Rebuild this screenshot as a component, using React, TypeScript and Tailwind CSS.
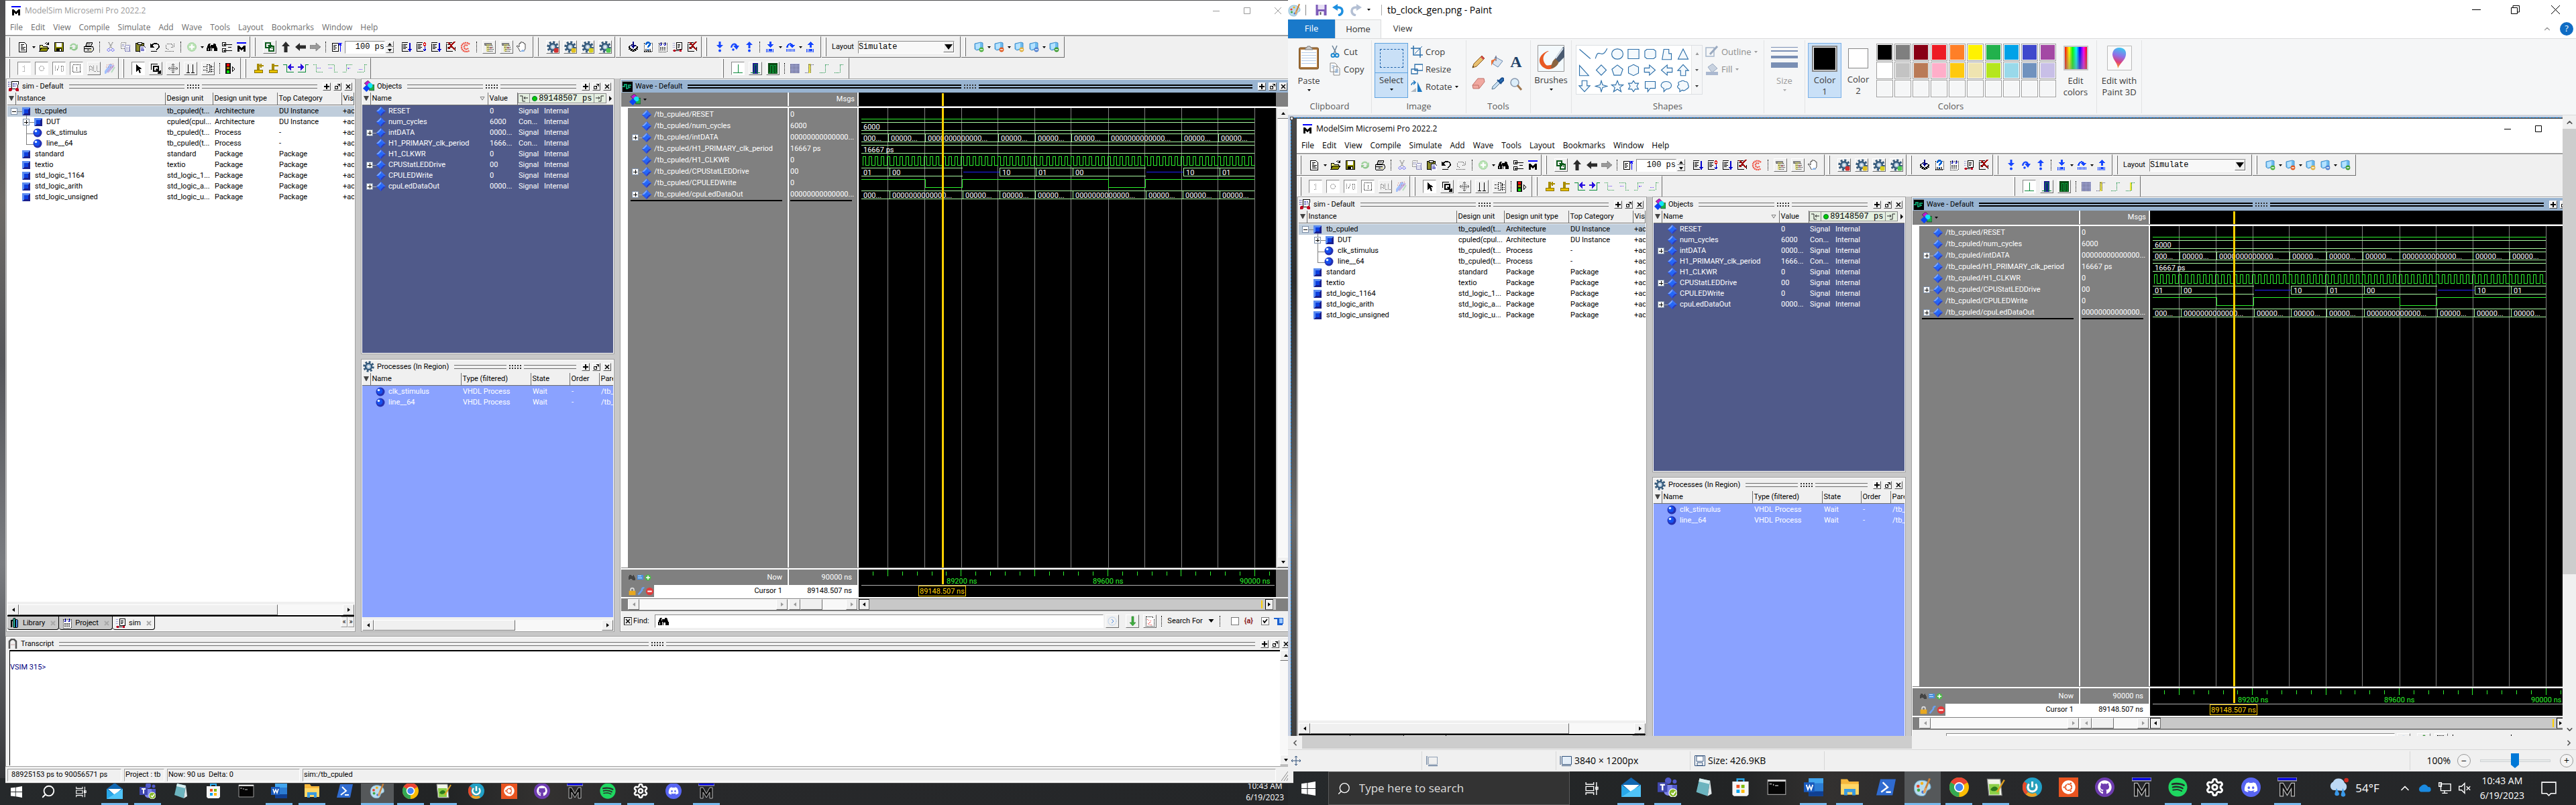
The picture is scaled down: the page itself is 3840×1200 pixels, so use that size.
import type { ReactNode } from "react";
import { FaDiscord, FaGithub, FaSpotify, FaUbuntu } from "react-icons/fa";
import { Settings, ChevronUp, ChevronDown, ChevronLeft, ChevronRight, Search } from "lucide-react";

/* ------------------------------------------------------------------ */
/* Small drawing helpers                                               */
/* ------------------------------------------------------------------ */

type Kids = { children?: ReactNode };

function Glyph({ children, size = 16, crisp = true }: Kids & { size?: number; crisp?: boolean }) {
  return (
    <svg
      viewBox="0 0 16 16"
      width={size}
      height={size}
      fill="none"
      className="shrink-0"
      shapeRendering={crisp ? "crispEdges" : "auto"}
      aria-hidden="true"
    >
      {children}
    </svg>
  );
}

function DownTri({ color = "#000" }: { color?: string }) {
  return (
    <svg viewBox="0 0 5 3" width="5" height="3" className="shrink-0" aria-hidden="true">
      <path d="M0 0h5L2.5 3z" fill={color} />
    </svg>
  );
}

const icons: Record<string, ReactNode> = {
  doc: (
    <Glyph>
      <path d="M2.5 1.5h8l3 3v11h-11z" fill="#fff" stroke="#000" />
      <path d="M4.5 4h5M4.5 6h3M4.5 8h7M4.5 10h5M4.5 12.5h7" stroke="#000" />
    </Glyph>
  ),
  open: (
    <Glyph>
      <path d="M1 14V5h4l1 2h6v2" fill="#ffff7a" stroke="#000" />
      <path d="M1 14l3-5h11l-3 5z" fill="#8a8a00" stroke="#000" />
      <path d="M9 3c2-2 4-1 5 1M14 1v3h-3" stroke="#000" />
    </Glyph>
  ),
  save: (
    <Glyph>
      <path d="M1.5 1.5h13v13h-13z" fill="#8a8a00" stroke="#000" />
      <path d="M4 2h8v6H4z" fill="#fff" />
      <path d="M4 10h8v4H4z" fill="#000" />
      <path d="M9 11h2v3H9z" fill="#fff" />
    </Glyph>
  ),
  refresh: (
    <Glyph crisp={false}>
      <path d="M2 7c1-5 8-6 10-2l2-1v5H9l2-2C9 4 5 4 5 7z" fill="#a4d3a2" />
      <path d="M14 9c-1 5-8 6-10 2l-2 1V8h5l-2 2c2 2 5 1 6-1z" fill="#8fc78c" />
    </Glyph>
  ),
  print: (
    <Glyph>
      <path d="M4 6l2-5h8l-2 5z" fill="#fff" stroke="#000" />
      <path d="M1 7h13l1 2v4l-2 2H2l-1-2z" fill="#ddd" stroke="#000" />
      <path d="M2 10h10M6 3h5M6 12h3" stroke="#000" />
      <path d="M10 12h2" stroke="#bb0" />
    </Glyph>
  ),
  cut: (
    <Glyph crisp={false}>
      <path d="M5 1l5 9M11 1L6 10" stroke="#666" strokeDasharray="1 1" strokeWidth="1.5" />
      <circle cx="5" cy="12.5" r="2" stroke="#33f" strokeDasharray="1.5 .7" />
      <circle cx="11" cy="12.5" r="2" stroke="#33f" strokeDasharray="1.5 .7" />
    </Glyph>
  ),
  copy: (
    <Glyph>
      <path d="M1.5 1.5h7v9h-7z" stroke="#555" strokeDasharray="1 1" />
      <path d="M7.5 5.5h7v9h-7z" fill="#fff" stroke="#228" strokeDasharray="1 1" />
      <path d="M9 8h5M9 10h5M9 12h5M3 4h4M3 6h3" stroke="#66a" strokeDasharray="1 1" />
    </Glyph>
  ),
  paste: (
    <Glyph>
      <path d="M1 2h12v12H1z" fill="#8a8a2a" stroke="#000" />
      <path d="M4 1h6v3H4z" fill="#eee" stroke="#000" />
      <path d="M7 6h6l3 3v7H7z" fill="#fff" stroke="#113" />
      <path d="M8.5 9h4M8.5 11h5M8.5 13h5" stroke="#22a" />
    </Glyph>
  ),
  undo: (
    <Glyph>
      <path d="M3 7c2-6 12-5 11 1-1 2-2 3-4 4" stroke="#000" strokeWidth="1.5" />
      <path d="M1 3v6h6z" fill="#000" />
      <path d="M2 14.5h9" stroke="#000" strokeWidth="1.5" />
    </Glyph>
  ),
  redo: (
    <Glyph>
      <path d="M13 7C11 1 2 2 2 8c1 2 2 3 4 4M14 3v5h-5M1 14.5h14" stroke="#444" strokeDasharray="1 1" />
    </Glyph>
  ),
  plus: (
    <Glyph crisp={false}>
      <circle cx="8" cy="8" r="6.5" fill="#b9e2b4" stroke="#74bd70" strokeDasharray="1 1" />
      <path d="M8 4v8M4 8h8" stroke="#fff" strokeWidth="2.5" />
    </Glyph>
  ),
  binoc: (
    <Glyph>
      <path d="M3 3h3v2h4V3h3l3 7v4h-5v-4H8v4H0v-4z" fill="#000" />
      <path d="M2 10v3M10 10v3M5 4v3" stroke="#fff" />
      <path d="M6 14V9h1v5z" fill="#fff" />
    </Glyph>
  ),
  tree: (
    <Glyph>
      <path d="M1.5 1.5h5v5h-5zM1.5 10.5h5v5h-5z" fill="#fff" stroke="#000" />
      <path d="M3 4h3M4 3v3M3 13h3M4 12v3M7 4h9M10 8h5M7 13h9" stroke="#000" />
    </Glyph>
  ),
  m: (
    <Glyph>
      <path d="M1 1h14v2H1z" fill="#00f" />
      <path d="M2 15V6h3l3 4 3-4h3v9h-3v-5l-3 4-3-4v5z" fill="#000" />
    </Glyph>
  ),
  link: (
    <Glyph>
      <path d="M2 2h7v7H2zM7 7h7v7H7z" stroke="#0a5a1a" strokeWidth="2" />
      <path d="M5 5h6v6" stroke="#0a5a1a" />
    </Glyph>
  ),
  up: (
    <Glyph crisp={false}>
      <path d="M8 0l6 7h-3.5v9h-5V7H2z" fill="#2b2b2b" />
    </Glyph>
  ),
  left: (
    <Glyph crisp={false}>
      <path d="M0 8l7-6v3.5h9v5H7V14z" fill="#2b2b2b" />
    </Glyph>
  ),
  right: (
    <Glyph crisp={false}>
      <path d="M16 8L9 2v3.5H0v5h9V14z" fill="#9a9a9a" stroke="#555" strokeDasharray="1 1" />
    </Glyph>
  ),
  docUp: (
    <Glyph>
      <path d="M1 2.5h9v12H1z" fill="#fff" stroke="#000" />
      <path d="M3 5h5M3 7h3M3 9h5M3 11h3" stroke="#000" />
      <path d="M13 15V2M10 2.5h6M11 6l2-3 2 3" stroke="#00f" />
    </Glyph>
  ),
  docDown: (
    <Glyph>
      <path d="M1 1.5h9M1 3v12M3 4h6M3 6h4M3 8h6M3 10h4M1 14.5h10" stroke="#000" />
      <path d="M13 2v12M11 11l2 3 2-3" stroke="#00c" strokeWidth="1.5" />
    </Glyph>
  ),
  docDiamond: (
    <Glyph>
      <path d="M1 1.5h9M1 3v12M3 4h6M3 6h4M3 8h6M3 10h4M1 14.5h10" stroke="#000" />
      <path d="M13 7v7M11 11l2 3 2-3" stroke="#00c" />
      <path d="M13 1l2 3-2 3-2-3z" stroke="#d00" />
    </Glyph>
  ),
  docX: (
    <Glyph>
      <path d="M1 1.5h9M1 3v12M3 4h6M3 8h6M3 10h4M1 14.5h10M14 8v6" stroke="#000" />
      <path d="M4 1l10 11M14 0L4 11" stroke="#a00000" strokeWidth="2" />
    </Glyph>
  ),
  swirl: (
    <Glyph crisp={false}>
      <path d="M14 4C9-1 1 3 2 9s8 8 12 4M11 6C8 4 5 6 6 9s4 3 6 1" stroke="#f04a3a" strokeWidth="2.2" strokeDasharray="2 .7" />
    </Glyph>
  ),
  hatch: (
    <Glyph>
      <path d="M1 2h11v4H1z" fill="#999" />
      <path d="M4 4h7v11H4z" fill="#dcd98a" />
      <path d="M8 6h6v9H8z" fill="#ddd" />
      <path d="M1 3h11M2 5h11M5 8h9M6 11h9M6 14h8" stroke="#333" strokeDasharray="1 1" />
      <path d="M9 9h3" stroke="#c44" />
    </Glyph>
  ),
  hand: (
    <Glyph crisp={false}>
      <path d="M4 10L1 7l1-1 3 2V3l1-1 1 1V1l2-.5.5 1L11 1l1 1v1l2 .5v7l-2 4H6z" fill="#fff" stroke="#333" strokeWidth=".9" />
      <path d="M6 15l4-3 3 1-1 2z" fill="#8ab4e8" />
    </Glyph>
  ),
  step1: (
    <Glyph>
      <path d="M1 8l6-4 8 4-7 5zM1 11l7 4 7-4M1 9.5l7 4 7-4" fill="#fff" stroke="#000" />
      <path d="M8 0v8M5 5l3 4 3-4" stroke="#008" strokeWidth="1.5" />
    </Glyph>
  ),
  help: (
    <Glyph>
      <path d="M2 2h12v13H2z" fill="#fff" stroke="#000" strokeDasharray="1 1" />
      <path d="M4 13h9M4 11h9M2 14.5h12" stroke="#000" strokeDasharray="2 1" />
      <path d="M5 5c0-5 6-4 6-1 0 2-3 2-3 5M8 11v2" stroke="#0060d0" strokeWidth="2.5" />
    </Glyph>
  ),
  grid2: (
    <Glyph>
      <path d="M2 2h12v13H2z" fill="#fff" stroke="#000" strokeDasharray="1 1" />
      <path d="M4 8h9M4 10h9M4 12h9" stroke="#000" strokeDasharray="2 1" />
      <path d="M5 1v5M11 1v5M3 4l2 2 2-2M9 4l2 2 2-2" stroke="#00a" />
    </Glyph>
  ),
  car: (
    <Glyph>
      <path d="M6 1h8v10H6z" fill="#fff" stroke="#000" />
      <path d="M1 2h4M1 5h4M1 8h4" stroke="#77c" strokeDasharray="1 1" />
      <path d="M8 4h4M8 6h4M8 8h3M2 13h12" stroke="#000" />
      <circle cx="3.5" cy="13.5" r="2" fill="#c00020" />
      <circle cx="12.5" cy="13.5" r="2" fill="#c00020" />
    </Glyph>
  ),
  bDown: (
    <Glyph crisp={false}>
      <path d="M6.5 0h3v5H13l-5 5-5-5h3.5z" fill="#1646ff" />
      <circle cx="8" cy="13.5" r="2" fill="#1646ff" />
    </Glyph>
  ),
  bOver: (
    <Glyph crisp={false}>
      <path d="M2 9C3 1 11 1 12 6h3l-4 6-5-6h3C8 4 5 4 4.5 9z" fill="#1646ff" />
      <circle cx="6" cy="12" r="1.8" fill="#1646ff" />
    </Glyph>
  ),
  bUp: (
    <Glyph crisp={false}>
      <path d="M6.5 10h3V5H13L8 0 3 5h3.5z" fill="#1646ff" />
      <circle cx="8" cy="13.5" r="2" fill="#1646ff" />
    </Glyph>
  ),
  bDown2: (
    <Glyph>
      <path d="M6.5 0h3v4H13l-5 5-5-5h3.5z" fill="#1646ff" />
      <path d="M2 13h12" stroke="#1646ff" strokeWidth="5" strokeDasharray="1 1" />
      <path d="M6 11h4v3H6z" fill="#1646ff" />
    </Glyph>
  ),
  bOver2: (
    <Glyph>
      <path d="M2 9C3 1 11 1 12 5h3l-4 5-5-5h3C8 4 5 4 4.5 9z" fill="#1646ff" />
      <path d="M2 13h13" stroke="#1646ff" strokeWidth="4" strokeDasharray="1 1" />
    </Glyph>
  ),
  bUp2: (
    <Glyph>
      <path d="M6.5 9h3V5H13L8 0 3 5h3.5z" fill="#1646ff" />
      <path d="M2 13h12" stroke="#1646ff" strokeWidth="5" strokeDasharray="1 1" />
      <path d="M6 11h4v3H6z" fill="#1646ff" />
    </Glyph>
  ),
  slot1: (
    <Glyph>
      <path d="M8 4v8M6 5h2M6 12h4" stroke="#777" strokeDasharray="1 1" />
    </Glyph>
  ),
  slot0: (
    <Glyph crisp={false}>
      <circle cx="8" cy="8" r="3.5" stroke="#444" strokeDasharray="1 1" />
    </Glyph>
  ),
  slotIO: (
    <Glyph>
      <path d="M2 4v8M8 4l-3 8M11 4h3v8h-3z" stroke="#555" strokeDasharray="1 1" />
    </Glyph>
  ),
  slotBox: (
    <Glyph>
      <path d="M2.5 2.5h11v11h-11zM8 6v5" stroke="#000" strokeDasharray="1 1" />
    </Glyph>
  ),
  slotAll: (
    <Glyph>
      <path d="M1 12V6l2-2 2 2v6M1 9h4M7.5 4v8h3M12.5 4v8h3" stroke="#555" strokeDasharray="1 1" />
    </Glyph>
  ),
  brushes: (
    <Glyph crisp={false}>
      <path d="M1 14L9 3" stroke="#8fb4ff" strokeWidth="4" strokeLinecap="round" opacity=".8" />
      <path d="M5 13l8-9" stroke="#b8a0dc" strokeWidth="3" strokeLinecap="round" opacity=".8" />
      <path d="M10 14l5-8" stroke="#a9d8b4" strokeWidth="2" opacity=".8" />
      <path d="M3 3l11-2M2 6h10" stroke="#c66" strokeDasharray="1 2" />
    </Glyph>
  ),
  pointer: (
    <Glyph>
      <path d="M5 2v11l3-3 2 5 2-1-2-5h4z" fill="#000" />
    </Glyph>
  ),
  zoomBox: (
    <Glyph>
      <path d="M1.5 10V1.5h9M5 5h7v7H5z" stroke="#000" strokeWidth="1.5" />
      <path d="M9 9l6 6M15 11v4h-4" stroke="#000" strokeWidth="1.5" />
    </Glyph>
  ),
  move: (
    <Glyph crisp={false}>
      <path d="M8 1v14M1 8h14M6 3l2-2 2 2M6 13l2 2 2-2M3 6L1 8l2 2M13 6l2 2-2 2" stroke="#333" strokeDasharray="1.5 .5" />
      <path d="M5 5h6v6H5z" stroke="#666" strokeDasharray="1 1" />
    </Glyph>
  ),
  cursors: (
    <Glyph>
      <path d="M4.5 2v12M11.5 2v12M2 14.5h5M9 14.5h5" stroke="#000" />
    </Glyph>
  ),
  gridBox: (
    <Glyph>
      <path d="M1 5h4M1 10h4M6 2.5h4v11H6zM12 3v11M12 5h4M12 9h4M12 12h4" stroke="#000" strokeDasharray="2 1" />
    </Glyph>
  ),
  traffic: (
    <Glyph>
      <path d="M1 0h8v16H1z" fill="#111" />
      <path d="M3 1h4v4H3z" fill="#f00" />
      <path d="M3 6h4v3H3z" fill="#a80" />
      <path d="M3 11h4v4H3z" fill="#0d0" />
      <path d="M11 5v8l4-4z" fill="#fff" stroke="#000" />
    </Glyph>
  ),
  padPlus: (
    <Glyph>
      <path d="M1 10h12v4H1z" fill="#e8c100" stroke="#8a7200" />
      <path d="M6 10V2h2v8M11 1v6M9 4h6" stroke="#a88c00" strokeWidth="1.5" />
    </Glyph>
  ),
  padMinus: (
    <Glyph>
      <path d="M1 10h12v4H1z" fill="#e8c100" stroke="#8a7200" />
      <path d="M6 10V2h2v8M9 4h6" stroke="#a88c00" strokeWidth="1.5" />
    </Glyph>
  ),
  edgeL: (
    <Glyph>
      <path d="M0 2h5v11h11" stroke="#0a8a3a" />
      <path d="M16 6H9M11 3L8 6l3 3z" stroke="#2a10e0" strokeWidth="1.5" />
    </Glyph>
  ),
  edgeR: (
    <Glyph>
      <path d="M16 2h-5v11H0" stroke="#0a8a3a" />
      <path d="M0 6h7M5 3l3 3-3 3z" stroke="#2a10e0" strokeWidth="1.5" />
    </Glyph>
  ),
  edge1: (
    <Glyph>
      <path d="M1 2h4v11h10" stroke="#2a9a4a" strokeDasharray="1 1" />
      <path d="M12 7H7l2-2" stroke="#63f" strokeDasharray="1 1" />
    </Glyph>
  ),
  edge2: (
    <Glyph>
      <path d="M1 2h9v11h5" stroke="#2a9a4a" strokeDasharray="1 1" />
      <path d="M2 7h5l-2 2" stroke="#63f" strokeDasharray="1 1" />
    </Glyph>
  ),
  edge3: (
    <Glyph>
      <path d="M15 2H6v11H1" stroke="#2a9a4a" strokeDasharray="1 1" />
      <path d="M12 7H8l2 2" stroke="#63f" strokeDasharray="1 1" />
    </Glyph>
  ),
  edge4: (
    <Glyph>
      <path d="M15 2h-4v11H1" stroke="#2a9a4a" strokeDasharray="1 1" />
      <path d="M3 9h5l-2-2" stroke="#63f" strokeDasharray="1 1" />
    </Glyph>
  ),
  pulse: (
    <Glyph>
      <path d="M1 14.5h14M8 2v12" stroke="#0a8a3a" />
    </Glyph>
  ),
  bluePulse: (
    <Glyph>
      <path d="M4 0h8v16H4z" fill="#1a1a8c" />
      <path d="M1 14.5h5V2h4v12.5h5" stroke="#0a8a3a" />
    </Glyph>
  ),
  greenPulse: (
    <Glyph>
      <path d="M1 0h14v16H1z" fill="#0a4a14" />
      <path d="M2 14h2V3h3v11h2V3h3v11h2" stroke="#0a9a3a" />
    </Glyph>
  ),
  mesh: (
    <Glyph>
      <path d="M1 1h14v14H1z" fill="#a9aee0" />
      <path d="M1 2h14M1 4h14M1 6h14M1 8h14M1 10h14M1 12h14M1 14h14" stroke="#334" strokeDasharray="1 1" />
    </Glyph>
  ),
  stepY: (
    <Glyph>
      <path d="M6 1h4v14H6z" fill="#e8e04a" />
      <path d="M1 14h5V2h9M9 3v12" stroke="#447" strokeDasharray="1 1" />
    </Glyph>
  ),
  stepG: (
    <Glyph>
      <path d="M1 14h8V2h6" stroke="#0a8a3a" strokeDasharray="1 1" />
    </Glyph>
  ),
  stepGY: (
    <Glyph>
      <path d="M7 2h3v12H7z" fill="#f0e840" />
      <path d="M1 14h8V2h6" stroke="#0a8a3a" strokeDasharray="1 1" />
    </Glyph>
  ),
};

function GearIcon({ badge, size = 18 }: { badge?: string; size?: number }) {
  return (
    <Glyph size={size} crisp={false}>
      <circle cx="8" cy="8" r="6.3" stroke="#35597a" strokeWidth="3" strokeDasharray="2.6 2.35" />
      <circle cx="8" cy="8" r="4.3" fill="#a9c3da" stroke="#35597a" strokeWidth="2.2" />
      <circle cx="8" cy="8" r="1.6" fill="#f0f0f0" />
      {badge && <rect x="9.5" y="9.5" width="6" height="6" rx="1.5" fill={badge} />}
    </Glyph>
  );
}

function FolderMark({ badge }: { badge: string }) {
  return (
    <Glyph crisp={false}>
      <path d="M2 3l9-2 3 1v8l-9 3-3-2z" fill="#6cbcf0" stroke="#2f7fc0" strokeWidth=".8" />
      <path d="M3 4l7-2v8l-6 2z" fill="#b4e2ff" />
      <circle cx="12" cy="12" r="3.4" fill={badge} />
      <path d="M10 12h4" stroke="#fff" strokeWidth="1.4" />
    </Glyph>
  );
}

function CubesIcon() {
  return (
    <Glyph size={17} crisp={false}>
      <path d="M2 4l5-4 4 4-4 4z" fill="#c21ad0" stroke="#222" strokeWidth=".6" />
      <path d="M9 6h7v8H9z" fill="#1fae48" stroke="#222" strokeWidth=".6" />
      <circle cx="10" cy="7" r="3.5" fill="#10e6f4" />
      <path d="M5 6l5 5-5 5-5-5z" fill="#0c44f4" />
    </Glyph>
  );
}

/* ------------------------------------------------------------------ */
/* ModelSim window                                                     */
/* ------------------------------------------------------------------ */

function Group({ children, className = "" }: Kids & { className?: string }) {
  return (
    <div className={`flex h-8 shrink-0 items-center border-b border-r border-[#6e6e6e] border-t border-t-white pl-1 ${className}`}>
      <span className="mr-2 h-7 w-[3px] shrink-0 border-l border-r border-l-white border-r-[#6e6e6e]" />
      {children}
    </div>
  );
}

function Tb({ id, kind = "flat", children, w = "w-[22px]" }: { id?: string; kind?: "flat" | "raised" | "sunk"; children?: ReactNode; w?: string }) {
  const look =
    kind === "raised"
      ? "h-5 w-5 mx-[3px] border border-t-white border-l-white border-r-[#6e6e6e] border-b-[#6e6e6e] bg-[#f0f0f0]"
      : kind === "sunk"
        ? "h-5 w-5 mx-[3px] border border-t-[#8a8a8a] border-l-[#8a8a8a] border-r-white border-b-white bg-white"
        : `h-5 ${w}`;
  return (
    <button type="button" aria-label={id ?? "tool"} className={`flex shrink-0 items-center justify-center ${look}`}>
      {id ? icons[id] : children}
    </button>
  );
}

function Dots({ className = "mx-2" }: { className?: string }) {
  return <span className={`h-4 w-px shrink-0 border-l border-dotted border-black ${className}`} />;
}

function Arrow({ className = "w-3" }: { className?: string }) {
  return (
    <span className={`flex shrink-0 justify-center ${className}`}>
      <DownTri />
    </span>
  );
}

function MiniButtons() {
  const base =
    "flex h-3 w-3 items-center justify-center border border-t-white border-l-white border-r-[#555] border-b-[#555] bg-[#f0f0f0]";
  return (
    <span className="flex shrink-0 gap-1">
      <button type="button" aria-label="Zoom pane" className={base}>
        <svg viewBox="0 0 8 8" width="8" height="8"><path d="M4 0v8M0 4h8" stroke="#000" strokeWidth="2" /></svg>
      </button>
      <button type="button" aria-label="Undock pane" className={base}>
        <svg viewBox="0 0 8 8" width="8" height="8" fill="none"><path d="M.5 3.5h4v4h-4zM3 5l4-4M4 .5h3.5V4" stroke="#000" /></svg>
      </button>
      <button type="button" aria-label="Close pane" className={base}>
        <svg viewBox="0 0 8 8" width="8" height="8"><path d="M1 1l6 6M7 1L1 7" stroke="#000" strokeWidth="1.5" /></svg>
      </button>
    </span>
  );
}

function PaneTitle({ icon, title, blue = false }: { icon: ReactNode; title: string; blue?: boolean }) {
  const rail = blue ? "border-y-2 border-black" : "border-y border-[#6e6e6e]";
  return (
    <div className={`flex h-[19px] shrink-0 items-center gap-1 pl-px pr-[3px] ${blue ? "bg-[#99b4d1]" : "bg-[#f0f0f0]"}`}>
      {icon}
      <span className="shrink-0 whitespace-nowrap">{title}</span>
      <span className={`ml-1 h-[6px] flex-1 ${rail}`} />
      <span className="h-[6px] w-[18px] shrink-0 border-y-2 border-dotted border-[#333]" />
      <span className={`mr-1 h-[6px] flex-1 ${rail}`} />
      <MiniButtons />
    </div>
  );
}

function PlusBox({ x, y = 3, minus = false }: { x: number; y?: number; minus?: boolean }) {
  return (
    <g>
      <rect x={x + 0.5} y={y + 0.5} width="9" height="9" rx="1" fill="#fff" stroke="#7d8fa8" />
      <path d={`M${x + 2} ${y + 5}h6${minus ? "" : `M${x + 5} ${y + 2}v6`}`} stroke="#000" />
    </g>
  );
}

function BlueBox({ x }: { x: number }) {
  return (
    <g>
      <rect x={x} y="2" width="12" height="12" fill="#0d3fe0" />
      <path d={`M${x} 14V2h12l-3 3h-6v6z`} fill="#5b8cf0" />
      <path d={`M${x} 14l3-3h6V5l3-3v12z`} fill="#1a1f8c" />
    </g>
  );
}

function Ball({ cx }: { cx: number }) {
  return (
    <g shapeRendering="auto">
      <circle cx={cx} cy="8" r="6.5" fill="#2430b0" />
      <circle cx={cx - 1} cy="7" r="4.5" fill="#1650f0" />
      <circle cx={cx - 2.5} cy="5.5" r="1.8" fill="#e4eeff" />
    </g>
  );
}

function DiamondRow({ plus = false, className = "h-4" }: { plus?: boolean; className?: string }) {
  return (
    <svg viewBox="0 0 39 16" width="39" className={`shrink-0 ${className}`} aria-hidden="true">
      {plus && (
        <g shapeRendering="crispEdges">
          <path d="M15 8h7" stroke="#b0b0b0" />
          <PlusBox x={6} />
        </g>
      )}
      <path d="M28 1l7 7-7 7-7-7z" fill="#2a3cc0" />
      <path d="M28 1v7h-7z" fill="#7aa8ff" />
      <path d="M28 1l7 7h-7z" fill="#3d6ff0" />
      <path d="M28 15v-7h-7z" fill="#2c5ae8" />
      <path d="M28 4l4 4-4 4-4-4z" fill="#2368f8" />
    </svg>
  );
}

const simRows: { name: string; kind: "root" | "dut" | "proc" | "last" | "pkg"; unit: string; type: string; cat: string }[] = [
  { name: "tb_cpuled", kind: "root", unit: "tb_cpuled(t...", type: "Architecture", cat: "DU Instance" },
  { name: "DUT", kind: "dut", unit: "cpuled(cpul...", type: "Architecture", cat: "DU Instance" },
  { name: "clk_stimulus", kind: "proc", unit: "tb_cpuled(t...", type: "Process", cat: "-" },
  { name: "line__64", kind: "last", unit: "tb_cpuled(t...", type: "Process", cat: "-" },
  { name: "standard", kind: "pkg", unit: "standard", type: "Package", cat: "Package" },
  { name: "textio", kind: "pkg", unit: "textio", type: "Package", cat: "Package" },
  { name: "std_logic_1164", kind: "pkg", unit: "std_logic_1...", type: "Package", cat: "Package" },
  { name: "std_logic_arith", kind: "pkg", unit: "std_logic_a...", type: "Package", cat: "Package" },
  { name: "std_logic_unsigned", kind: "pkg", unit: "std_logic_u...", type: "Package", cat: "Package" },
];

function SimTree({ kind }: { kind: string }) {
  const deep = kind === "dut" || kind === "proc" || kind === "last";
  return (
    <svg width={deep ? 58 : 41} height="16" className="shrink-0" shapeRendering="crispEdges" fill="none" aria-hidden="true">
      {kind === "root" && (
        <g>
          <path d="M15 8.5h8M28.5 12v4" stroke="#808080" />
          <PlusBox x={5} minus />
          <BlueBox x={22} />
        </g>
      )}
      {kind === "dut" && (
        <g>
          <path d="M28.5 0v16M29 8.5h11" stroke="#808080" />
          <PlusBox x={23} />
          <BlueBox x={40} />
        </g>
      )}
      {kind === "proc" && (
        <g>
          <path d="M28.5 0v16M29 9.5h11" stroke="#808080" />
          <Ball cx={45} />
        </g>
      )}
      {kind === "last" && (
        <g>
          <path d="M28.5 0v10M29 9.5h11" stroke="#808080" />
          <Ball cx={45} />
        </g>
      )}
      {kind === "pkg" && <BlueBox x={22} />}
    </svg>
  );
}

function Th({ children, className = "" }: Kids & { className?: string }) {
  return (
    <th className={`h-[18px] overflow-hidden whitespace-nowrap border-b border-r border-[#6e6e6e] bg-[#f0f0f0] p-0 pl-[2px] text-left font-normal ${className}`}>
      {children}
    </th>
  );
}

function FilterTri() {
  return (
    <svg viewBox="0 0 8 7" width="8" height="7" aria-label="Filter">
      <path d="M0 0h8L4.5 7h-1z" fill="#444" />
    </svg>
  );
}

function HScroll({ thumb }: { thumb: string }) {
  const b = "flex h-4 w-[17px] shrink-0 items-center justify-center border border-t-white border-l-white border-r-[#6e6e6e] border-b-[#6e6e6e] bg-[#f0f0f0]";
  return (
    <div className="flex h-4 shrink-0 bg-[#f8f8f8]">
      <button type="button" aria-label="Scroll left" className={b}>
        <svg viewBox="0 0 4 6" width="4" height="6"><path d="M4 0v6L0 3z" /></svg>
      </button>
      <div className="flex-1">
        <div className={`h-4 border border-t-white border-l-white border-r-[#6e6e6e] border-b-[#6e6e6e] bg-[#f0f0f0] ${thumb}`} />
      </div>
      <button type="button" aria-label="Scroll right" className={b}>
        <svg viewBox="0 0 4 6" width="4" height="6"><path d="M0 0v6l4-3z" /></svg>
      </button>
    </div>
  );
}

const frame = "border border-[#a0a0a0] shadow-[inset_0_0_0_1px_#ffffff] p-px flex flex-col min-h-0 overflow-hidden";

function SimPane() {
  return (
    <section className={`w-[521px] shrink-0 bg-[#f0f0f0] ${frame}`}>
      <PaneTitle icon={<Glyph size={17}><path d="M5 1h10l-2 11H5z" fill="#fff" stroke="#000" /><path d="M0 2h4M0 5h4M0 8h4M7 4h5M7 6h5M7 8h4" stroke="#44a" strokeDasharray="2 1" /><circle cx="3" cy="13" r="2.5" fill="#c00020" /><circle cx="13" cy="13" r="2.5" fill="#c00020" /></Glyph>} title="sim - Default" />
      <div className="min-h-0 flex-1 bg-white">
        <table className="w-full table-fixed border-collapse">
          <colgroup>
            <col className="w-3" />
            <col className="w-[223px]" />
            <col className="w-[71px]" />
            <col className="w-24" />
            <col className="w-24" />
            <col />
          </colgroup>
          <thead>
            <tr>
              <Th><FilterTri /></Th>
              <Th>Instance</Th>
              <Th>Design unit</Th>
              <Th>Design unit type</Th>
              <Th>Top Category</Th>
              <Th>Visi</Th>
            </tr>
          </thead>
          <tbody>
            <tr className="h-[2px]"><td colSpan={6} className="p-0" /></tr>
            {simRows.map((r, i) => (
              <tr key={r.name} className={`h-4 ${i === 0 ? "bg-[#bfcddb]" : ""}`}>
                <td colSpan={2} className="p-0">
                  <span className="flex h-4 items-center"><SimTree kind={r.kind} />{r.name}</span>
                </td>
                <td className="whitespace-nowrap p-0 pl-[3px]">{r.unit}</td>
                <td className="whitespace-nowrap p-0 pl-[3px]">{r.type}</td>
                <td className="whitespace-nowrap p-0 pl-[3px]">{r.cat}</td>
                <td className="overflow-hidden whitespace-nowrap p-0 pl-[2px]">+ac</td>
              </tr>
            ))}
          </tbody>
        </table>
      </div>
      <div className="h-1 shrink-0" />
      <HScroll thumb="w-4/5" />
      <div className="flex h-[23px] shrink-0 items-start border-t-2 border-black">
        {["Library", "Project", "sim"].map((t) => (
          <button
            key={t}
            type="button"
            className={`flex h-5 items-center gap-1 rounded-b border-b border-r border-black px-1 ${t === "sim" ? "bg-[#f0f0f0]" : "bg-[#c8c8c8]"}`}
          >
            {t === "Library" && <Glyph size={15}><path d="M2 15V4h3v11M12 15V4" stroke="#000" strokeWidth="2" /><path d="M5 1h3v14H5z" fill="#2ab8a0" stroke="#000" /><path d="M9 3h3v12H9z" fill="#4a8ae8" stroke="#000" /></Glyph>}
            {t === "Project" && icons.grid2}
            {t === "sim" && icons.car}
            <span>{t}</span>
            <svg viewBox="0 0 8 8" width="8" height="8" className="ml-1"><path d="M1 1l6 6M7 1L1 7" stroke="#a8a8a8" strokeWidth="2" /></svg>
          </button>
        ))}
        <span className="flex-1" />
        <button type="button" aria-label="Previous tab" className="h-4 w-[10px] border border-[#999] border-l-white bg-[#f0f0f0] leading-3">«</button>
        <button type="button" aria-label="Next tab" className="h-4 w-[10px] border border-[#999] border-l-white bg-[#f0f0f0] leading-3">»</button>
      </div>
    </section>
  );
}

const signals = [
  { name: "RESET", value: "0", wave: "0", kind: "Signal", plus: false },
  { name: "num_cycles", value: "6000", wave: "6000", kind: "Con...", plus: false },
  { name: "intDATA", value: "0000...", wave: "00000000000000...", kind: "Signal", plus: true },
  { name: "H1_PRIMARY_clk_period", value: "1666...", wave: "16667 ps", kind: "Con...", plus: false },
  { name: "H1_CLKWR", value: "0", wave: "0", kind: "Signal", plus: false },
  { name: "CPUStatLEDDrive", value: "00", wave: "00", kind: "Signal", plus: true },
  { name: "CPULEDWrite", value: "0", wave: "0", kind: "Signal", plus: false },
  { name: "cpuLedDataOut", value: "0000...", wave: "00000000000000...", kind: "Signal", plus: true },
];

function ObjectsPane() {
  return (
    <section className={`h-[411px] shrink-0 bg-[#f0f0f0] ${frame}`}>
      <PaneTitle icon={<CubesIcon />} title="Objects" />
      <div className="min-h-0 flex-1 bg-[#505a8a] text-white">
        <table className="w-full table-fixed border-collapse">
          <colgroup>
            <col className="w-3" />
            <col className="w-[175px]" />
            <col className="w-[44px]" />
            <col className="w-[38px]" />
            <col />
          </colgroup>
          <thead className="text-black">
            <tr>
              <Th><FilterTri /></Th>
              <Th>
                <span className="flex items-center justify-between pr-1">
                  Name
                  <svg viewBox="0 0 8 7" width="8" height="6" fill="none"><path d="M.5.5h7L4 6z" stroke="#666" /></svg>
                </span>
              </Th>
              <Th>Value</Th>
              <th colSpan={2} className="h-[18px] border-b border-[#6e6e6e] bg-[#f0f0f0] p-0 text-left font-normal">
                <span className="flex items-center">
                  <span className="flex h-[15px] w-[132px] items-center justify-between border border-[#8a8a8a] bg-[#e4efe0] px-[2px]">
                    <svg viewBox="0 0 12 10" width="12" height="10" fill="none"><path d="M0 1h4v8h4M12 4H6M8 2L6 4l2 2" stroke="#222" /></svg>
                    <span className="h-full w-px bg-[#8a8a8a]" />
                    <span className="h-2 w-2 rounded-full border border-[#063] bg-[#0c0]" />
                    <span className="font-['Liberation_Mono',monospace] text-xs leading-3">89148507 ps</span>
                    <span className="h-full w-px bg-[#8a8a8a]" />
                    <svg viewBox="0 0 12 10" width="12" height="10" fill="none"><path d="M12 1H8v8H4M0 4h6M4 2l2 2-2 2" stroke="#222" /></svg>
                  </span>
                  <svg viewBox="0 0 4 8" width="4" height="8" className="ml-1"><path d="M0 0v8l4-4z" /></svg>
                </span>
              </th>
            </tr>
          </thead>
          <tbody>
            <tr className="h-[2px]"><td colSpan={5} className="p-0" /></tr>
            {signals.map((s) => (
              <tr key={s.name} className="h-4">
                <td colSpan={2} className="p-0"><span className="flex h-4 items-center"><DiamondRow plus={s.plus} />{s.name}</span></td>
                <td className="whitespace-nowrap p-0 pl-[3px]">{s.value}</td>
                <td className="whitespace-nowrap p-0 pl-[2px]">{s.kind}</td>
                <td className="whitespace-nowrap p-0 pl-[2px]">Internal</td>
              </tr>
            ))}
          </tbody>
        </table>
      </div>
    </section>
  );
}

function ProcessesPane() {
  return (
    <section className={`flex-1 bg-[#f0f0f0] ${frame}`}>
      <PaneTitle icon={<GearIcon size={17} />} title="Processes (In Region)" />
      <div className="min-h-0 flex-1 bg-[#8aa2ff] text-white">
        <table className="w-full table-fixed border-collapse">
          <colgroup>
            <col className="w-3" />
            <col className="w-[135px]" />
            <col className="w-[104px]" />
            <col className="w-[58px]" />
            <col className="w-11" />
            <col />
          </colgroup>
          <thead className="text-black">
            <tr>
              <Th><FilterTri /></Th>
              <Th>Name</Th>
              <Th>Type (filtered)</Th>
              <Th>State</Th>
              <Th>Order</Th>
              <Th className="border-r-0">Pare</Th>
            </tr>
          </thead>
          <tbody>
            <tr className="h-[2px]"><td colSpan={6} className="p-0" /></tr>
            {["clk_stimulus", "line__64"].map((n) => (
              <tr key={n} className="h-4">
                <td colSpan={2} className="p-0">
                  <span className="flex h-4 items-center"><svg width="39" height="16" className="shrink-0"><Ball cx={27} /></svg>{n}</span>
                </td>
                <td className="p-0 pl-[3px]">VHDL Process</td>
                <td className="p-0 pl-[3px]">Wait</td>
                <td className="p-0 pl-[3px]">-</td>
                <td className="overflow-hidden whitespace-nowrap p-0 pl-[3px]">/tb_</td>
              </tr>
            ))}
          </tbody>
        </table>
      </div>
      <div className="h-1 shrink-0" />
      <HScroll thumb="w-[62%]" />
    </section>
  );
}

/* Waveform geometry, measured from the left edge of the trace area. */
const GRID = [43, 98, 153, 207, 262, 316, 372, 426, 481, 535, 590];
const CUR = 125;
const END = 590;

function Bus({ y, segs }: { y: number; segs: { x: number; label?: string; z?: boolean }[] }) {
  return (
    <g>
      {segs.map((s, i) => {
        const end = i + 1 < segs.length ? segs[i + 1].x : END;
        if (s.z) return <path key={s.x} d={`M${s.x + 1} ${y + 6.5}H${end}`} stroke="#2020ff" />;
        return (
          <g key={s.x}>
            <path d={`M${s.x} ${y + 0.5}H${end}M${s.x} ${y + 12.5}H${end}${i ? `M${s.x + 0.5} ${y}v12` : ""}`} stroke="#a8f8a0" />
            {s.label && <text x={s.x + (i ? 4 : 3)} y={y + 10.5} fill="#fff" className="text-[11px]">{s.label}</text>}
          </g>
        );
      })}
    </g>
  );
}

const L = "00000...";
const W = "0000000000000...";

function Traces() {
  let clk = "";
  for (let i = 0; i < 64; i++) {
    const x = 6 + Math.round(i * 9.12);
    clk += `M${x + 0.5} 85.5V72.5h4V85.5h5`;
  }
  return (
    <svg className="absolute inset-0 h-full w-full" fill="none" shapeRendering="crispEdges" aria-label="Waveforms">
      {GRID.map((x) => (
        <path key={x} d={`M${x + 0.5} 0V2000`} stroke="#808080" />
      ))}
      <path d="M4 16.5H590" stroke="#2cf02c" />
      <Bus y={21} segs={[{ x: 4, label: "6000" }]} />
      <Bus
        y={38}
        segs={[
          { x: 4, label: "000..." }, { x: 44, label: L }, { x: 99, label: W }, { x: 208, label: L }, { x: 263, label: L },
          { x: 317, label: L }, { x: 372, label: W }, { x: 481, label: L }, { x: 536, label: L },
        ]}
      />
      <Bus y={55} segs={[{ x: 4, label: "16667 ps" }]} />
      <path d={clk} stroke="#2cf02c" />
      <Bus
        y={89}
        segs={[
          { x: 4, label: "01" }, { x: 46, label: "00" }, { x: 155, z: true }, { x: 210, label: "10" }, { x: 264, label: "01" },
          { x: 319, label: "00" }, { x: 428, z: true }, { x: 484, label: "10" }, { x: 538, label: "01" },
        ]}
      />
      <path d="M4 106.5H99V118.5H154.5V106.5H372.5V118.5H427.5V106.5H590" stroke="#2cf02c" />
      <Bus
        y={123}
        segs={[
          { x: 4, label: "000..." }, { x: 46, label: W }, { x: 155, label: L }, { x: 210, label: L }, { x: 263, label: L },
          { x: 319, label: W }, { x: 428, label: L }, { x: 483, label: L }, { x: 538, label: L },
        ]}
      />
      <path d={`M${CUR} 0V2000`} stroke="#ffd000" strokeWidth="3" />
    </svg>
  );
}

function Timeline() {
  const ticks = Array.from({ length: 28 }, (_, i) => 21 + Math.round(i * 21.88));
  return (
    <svg className="h-[41px] w-full" fill="none" shapeRendering="crispEdges" aria-label="Time scale">
      {ticks.map((x, i) => (
        <path key={x} d={`M${x + 0.5} ${i % 5 === 1 ? 0 : 3}V${i % 5 === 1 ? 10 : 9}`} stroke="#2cf02c" />
      ))}
      <g fill="#2cf02c" className="text-[11px]">
        <text x="131" y="21">89200 ns</text>
        <text x="349" y="21">89600 ns</text>
        <text x="568" y="21">90000 ns</text>
      </g>
      <path d="M4 23.5H620" stroke="#b0b0b0" />
      <path d={`M${CUR} 0V22`} stroke="#ffd000" strokeWidth="3" />
      <rect x="89.5" y="24.5" width="70" height="15" stroke="#ffd000" />
      <text x="91" y="36" fill="#ffd000" className="text-[11px]">89148.507 ns</text>
    </svg>
  );
}

function ScrollPiece({ thumb }: { thumb?: boolean }) {
  const b = "flex h-4 w-[17px] shrink-0 items-center justify-center border border-t-white border-l-white border-r-[#6e6e6e] border-b-[#6e6e6e] bg-[#f0f0f0]";
  return (
    <div className="flex h-4 flex-1 bg-[#f8f8f8]">
      <button type="button" aria-label="Scroll left" className={b}><svg viewBox="0 0 4 6" width="4" height="6"><path d="M4 0v6L0 3z" fill="#999" /></svg></button>
      {thumb && <span className="w-[33px] border border-t-white border-l-white border-r-[#6e6e6e] border-b-[#6e6e6e] bg-[#f0f0f0]" />}
      <span className="flex-1" />
      <button type="button" aria-label="Scroll right" className={b}><svg viewBox="0 0 4 6" width="4" height="6"><path d="M0 0v6l4-3z" fill="#999" /></svg></button>
    </div>
  );
}

const waveCols = "grid grid-cols-[250px_104px_1fr_20px] shrink-0";
const cell = "border-r-2 border-white shadow-[inset_-1px_0_0_#6e6e6e]";

function WavePane() {
  return (
    <section className={`min-w-0 flex-1 bg-[#f0f0f0] ${frame}`}>
      <PaneTitle
        blue
        title="Wave - Default"
        icon={<Glyph size={16}><path d="M0 0h16v16H0z" fill="#000" stroke="#888" /><path d="M1 8h3V5h3v6h2M10 11V6h4M10 9h3" stroke="#0c9a6a" strokeWidth="1.5" /></Glyph>}
      />
      <div className={`${waveCols} h-5 bg-[#808080] text-white`}>
        <div className={`flex items-center gap-1 pl-3 ${cell}`}><CubesIcon /><DownTri /></div>
        <div className={`flex items-center justify-end pr-1 ${cell}`}>Msgs</div>
        <div className="relative bg-black"><svg className="absolute inset-0 h-full w-full"><path d={`M${CUR} 1V20`} stroke="#ffd000" strokeWidth="3" shapeRendering="crispEdges" /></svg></div>
        <div />
      </div>
      <div className="h-[3px] shrink-0 border-t border-[#808080] bg-white" />
      <div className="grid min-h-0 flex-1 grid-cols-[250px_104px_1fr_20px] bg-[#808080] text-white">
        <div className={`border-l-[10px] border-l-white pt-px ${cell}`}>
          {signals.map((s) => (
            <div key={s.name} className="flex h-[17px] items-center whitespace-nowrap"><DiamondRow plus={s.plus} />/tb_cpuled/{s.name}</div>
          ))}
          <div className="ml-1 mr-2 h-px border-t-2 border-black" />
        </div>
        <div className={`pl-[2px] pt-px ${cell}`}>
          {signals.map((s) => (
            <div key={s.name} className="h-[17px] whitespace-nowrap leading-[17px]">{s.wave}</div>
          ))}
          <div className="mr-2 h-px border-t-2 border-black" />
        </div>
        <div className="relative overflow-hidden bg-black"><Traces /></div>
        <div className="flex flex-col justify-between border-l-2 border-[#c8c8c8] bg-[#f8f8f8]">
          {[0, 1].map((i) => (
            <button key={i} type="button" aria-label={i ? "Scroll down" : "Scroll up"} className="flex h-4 items-center justify-center border border-t-white border-l-white border-r-[#6e6e6e] border-b-[#6e6e6e] bg-[#f0f0f0]">
              <svg viewBox="0 0 6 4" width="6" height="4"><path d={i ? "M0 0h6L3 4z" : "M0 4h6L3 0z"} /></svg>
            </button>
          ))}
        </div>
      </div>
      <div className="h-[3px] shrink-0 border-t border-[#808080] bg-white" />
      <div className={`${waveCols} h-[41px] bg-[#808080] text-white`}>
        <div className={cell}>
          <div className="flex h-[23px] items-center pl-[10px] pr-2">
            <Glyph size={12}><path d="M1 12V6l3-4h2l2 4 3-4 3 6v5H9l-1-3z" fill="#444" /></Glyph>
            <Glyph size={12}><path d="M2 2h12v10H2z" fill="#4a90e0" /><path d="M4 5h6M4 8h8" stroke="#fff" /></Glyph>
            <Glyph size={12} crisp={false}><circle cx="8" cy="8" r="6" fill="#4cb848" /><path d="M8 4v8M4 8h8" stroke="#fff" strokeWidth="2" /></Glyph>
            <span className="ml-auto">Now</span>
          </div>
          <div className="flex h-[18px] items-center pl-[10px]">
            <Glyph size={13} crisp={false}><path d="M5 8V5a3 3 0 016 0v3" stroke="#ddd" strokeWidth="2" /><path d="M2 7h12v8H2z" fill="#e8a820" /></Glyph>
            <Glyph size={13} crisp={false}><path d="M3 14L10 6a3 3 0 014-4" stroke="#6aa0f0" strokeWidth="3" /></Glyph>
            <Glyph size={13} crisp={false}><circle cx="8" cy="8" r="7" fill="#e03c3c" /><path d="M4 8h8" stroke="#fff" strokeWidth="2.5" /></Glyph>
            <span className="flex h-full flex-1 items-center justify-end bg-white pr-2 text-black">Cursor 1</span>
          </div>
        </div>
        <div className={cell}>
          <div className="flex h-[23px] items-center justify-end pr-2">90000 ns</div>
          <div className="flex h-[18px] items-center justify-end bg-white pr-2 text-black">89148.507 ns</div>
        </div>
        <div className="overflow-hidden bg-black"><Timeline /></div>
        <div />
      </div>
      <div className="h-[2px] shrink-0 bg-white" />
      <div className={`${waveCols} h-[18px] items-center bg-[#808080]`}>
        <div className="flex border-r-2 border-white pl-[10px]"><ScrollPiece /></div>
        <div className="flex border-r-2 border-white"><ScrollPiece thumb /></div>
        <div className="flex h-4 items-center bg-[#c8c8c8] pr-1">
          <button type="button" aria-label="Scroll waves left" className="flex h-4 w-4 items-center justify-center border border-r-[#6e6e6e] border-b-[#6e6e6e] bg-[#f0f0f0]"><svg viewBox="0 0 4 6" width="4" height="8"><path d="M4 0v6L0 3z" /></svg></button>
          <span className="ml-auto h-3 w-[2px] bg-[#ffd000]" />
          <button type="button" aria-label="Scroll waves right" className="ml-1 flex h-4 w-3 items-center justify-center border border-r-[#6e6e6e] border-b-[#6e6e6e] bg-[#f0f0f0]"><svg viewBox="0 0 4 6" width="4" height="8"><path d="M0 0v6l4-3z" /></svg></button>
        </div>
        <div />
      </div>
      <div className="flex h-[30px] shrink-0 items-center border-t border-[#808080] pl-1 pr-2">
        <button type="button" aria-label="Close find bar" className="flex h-3 w-3 items-center justify-center border border-r-[#555] border-b-[#555]">
          <svg viewBox="0 0 8 8" width="8" height="8"><path d="M1 1l6 6M7 1L1 7" stroke="#000" strokeWidth="1.5" /></svg>
        </button>
        <label className="flex min-w-0 flex-1 items-center">
          <span className="ml-[2px] mr-2 shrink-0">Find:</span>
          <span className="flex h-5 flex-1 items-center border border-t-[#8a8a8a] border-l-[#8a8a8a] border-white bg-white pl-1">
            {icons.binoc}
            <input type="text" className="min-w-0 flex-1 bg-transparent outline-none" />
          </span>
        </label>
        <Tb kind="raised"><Glyph crisp={false}><circle cx="8" cy="8" r="6" stroke="#8ab4e8" strokeDasharray="1 1" /><path d="M7 5l3 3-3 3" stroke="#4a8ae0" /></Glyph></Tb>
        <span className="ml-1" />
        <Tb kind="raised"><Glyph crisp={false}><path d="M7 1h3v9h3l-4.5 5L4 10h3z" fill="#3fae3f" stroke="#287a28" strokeWidth=".6" /></Glyph></Tb>
        <Tb kind="raised"><Glyph><path d="M2.5 1.5h9l3 3v11h-12z" fill="#fff" stroke="#000" strokeDasharray="1 1" /><path d="M4 5l6 3-5 4 6 2" stroke="#e33" strokeDasharray="1 1" /></Glyph></Tb>
        <Dots className="ml-1 mr-2" />
        <button type="button" className="flex items-center gap-2 whitespace-nowrap">Search For <svg viewBox="0 0 8 5" width="9" height="5"><path d="M0 0h8L4 5z" /></svg></button>
        <Dots className="ml-2 mr-4" />
        <input type="checkbox" aria-label="Match braces" className="h-3 w-3 appearance-none border border-[#777] bg-white" />
        <span className="mx-2 font-bold text-[#8a1a1a]">{"{a}"}</span>
        <label className="ml-1 flex h-3 w-3 items-center justify-center border border-[#777] bg-white">
          <input type="checkbox" defaultChecked aria-label="Wrap search" className="sr-only" />
          <svg viewBox="0 0 8 8" width="8" height="8" fill="none"><path d="M1 3l2 3 4-5" stroke="#000" strokeWidth="1.8" /></svg>
        </label>
        <span className="ml-[6px]"><Glyph><path d="M1 4h6v9h7" stroke="#1a60d0" strokeWidth="2" /><path d="M8 3h6v8H8z" fill="#9cc8ff" stroke="#1a60d0" /></Glyph></span>
      </div>
    </section>
  );
}

function Toolbars({ active }: { active: boolean }) {
  return (
    <div className="h-[65px] shrink-0 overflow-hidden border-t-2 border-[#a0a0a0] bg-[#f0f0f0] text-xs">
      <div className="flex gap-px">
        <Group className="w-[365px]">
          <Tb id="doc" /><Arrow className="w-[10px]" /><Tb id="open" /><Tb id="save" /><Tb id="refresh" /><Tb id="print" />
          <Dots className="mx-[5px]" />
          <Tb id="cut" /><Tb id="copy" /><Tb id="paste" /><Tb id="undo" /><Tb id="redo" />
          <Dots className="mx-[5px]" />
          <Tb id="plus" /><Arrow className="w-2" /><Tb id="binoc" /><Tb id="tree" /><Tb id="m" />
        </Group>
        <Group className="w-[421px]">
          <Tb id="link" kind="raised" /><Tb id="up" /><Tb id="left" /><Tb id="right" />
          <Dots className="mx-1" />
          <Tb id="docUp" w="w-6" />
          <span className="flex h-[19px] w-[60px] shrink-0 border border-t-[#8a8a8a] border-l-[#8a8a8a] border-white bg-white">
            <input type="text" aria-label="Run length" defaultValue="100 ps" className="w-full bg-transparent text-right font-['Liberation_Mono',monospace] text-xs outline-none" />
          </span>
          <span className="ml-px mr-2 flex flex-col">
            {[1, 0].map((u) => (
              <button key={u} type="button" aria-label={u ? "Increase" : "Decrease"} className="flex h-[9px] w-3 items-center justify-center border border-t-white border-l-white border-r-[#6e6e6e] border-b-[#6e6e6e]">
                <svg viewBox="0 0 6 4" width="6" height="4"><path d={u ? "M0 4h6L3 0z" : "M0 0h6L3 4z"} /></svg>
              </button>
            ))}
          </span>
          <Tb id="docDown" /><Tb id="docDiamond" /><Tb id="docDown" /><Tb id="docX" /><Tb id="swirl" />
          <Dots className="mx-[5px]" />
          <Tb id="hatch" kind="raised" /><Tb id="hatch" kind="raised" /><Tb id="hand" w="w-[18px]" />
        </Group>
        <Group className="w-[121px]">
          <Tb kind="raised"><GearIcon badge="#d03030" /></Tb>
          <Tb kind="raised"><GearIcon badge="#e0c020" /></Tb>
          <Tb kind="raised"><GearIcon badge="#d8d020" /></Tb>
          <Tb kind="raised"><GearIcon badge="#50c850" /></Tb>
        </Group>
        <Group className="w-[128px]">
          <Tb id="step1" /><Tb id="help" /><Tb id="grid2" /><Tb id="car" /><Tb id="docX" />
        </Group>
        <Group className="w-[177px]">
          <Tb id="bDown" /><Tb id="bOver" /><Tb id="bUp" /><Dots className="mx-1" />
          <Tb id="bDown2" /><Arrow className="w-2" /><Tb id="bOver2" /><Arrow className="w-2" /><Tb id="bUp2" />
        </Group>
        <Group className="w-[207px]">
          <label className="flex items-center text-[11px]">
            Layout
            <span className="relative ml-[6px] flex h-[19px] w-36 items-center border border-t-[#8a8a8a] border-l-[#8a8a8a] border-white bg-[#f8f8f8]">
              <select className="h-full w-full appearance-none bg-transparent font-['Liberation_Mono',monospace] text-xs outline-none"><option>Simulate</option></select>
              <span className="pointer-events-none absolute right-0 top-0 flex h-4 w-4 items-center justify-center border border-t-white border-l-white border-r-[#6e6e6e] border-b-[#6e6e6e] bg-[#f0f0f0]">
                <svg viewBox="0 0 12 8" width="12" height="8"><path d="M0 0h12L6 8z" /></svg>
              </span>
            </span>
          </label>
        </Group>
        <Group className="w-[154px]">
          <Tb><FolderMark badge="#4caf3c" /></Tb><Arrow className="w-2" />
          <Tb><FolderMark badge="#e05a20" /></Tb><Arrow className="w-2" />
          <Tb><FolderMark badge="#e0b040" /></Tb>
          <Tb><FolderMark badge="#5080d0" /></Tb><Arrow className="w-2" />
          <Tb><FolderMark badge="#3c9a30" /></Tb>
        </Group>
      </div>
      <div className="flex gap-px">
        <Group className="w-[169px]">
          <Tb id="slot1" kind="sunk" /><Tb id="slot0" kind="sunk" /><Tb id="slotIO" kind="sunk" /><Tb id="slotBox" kind="sunk" /><Tb id="slotAll" kind="raised" /><Tb id="brushes" />
        </Group>
        <Group className="w-[181px]">
          <Tb id="pointer" kind="sunk" /><Tb id="zoomBox" kind="raised" /><Tb id="move" kind="raised" /><Tb id="cursors" kind="raised" /><Tb id="gridBox" kind="raised" />
          <Dots className="mx-1" /><Tb id="traffic" />
        </Group>
        <Group className="w-[193px]">
          <Tb id="padPlus" /><Tb id="padMinus" /><Tb id="edgeL" /><Tb id="edgeR" /><Tb id="edge1" /><Tb id="edge2" /><Tb id="edge3" /><Tb id="edge4" />
        </Group>
        <Group className="ml-[518px] w-[194px]">
          <Tb id="pulse" kind="sunk" /><Tb id="bluePulse" kind="raised" /><Tb id="greenPulse" kind="raised" /><Dots className="mx-1" />
          <Tb id="mesh" /><Tb id="stepY" /><Tb id="stepG" /><Tb id={active ? "stepGY" : "stepG"} />
        </Group>
      </div>
    </div>
  );
}

const menus = ["File", "Edit", "View", "Compile", "Simulate", "Add", "Wave", "Tools", "Layout", "Bookmarks", "Window", "Help"];

function ModelSim({ active }: { active: boolean }) {
  return (
    <div className="flex h-full flex-col overflow-hidden bg-[#f0f0f0] font-[Roboto,sans-serif] text-[11px] leading-4 text-black">
      <header className={`flex h-[29px] shrink-0 items-center bg-white pl-2 font-['Open_Sans',sans-serif] text-xs ${active ? "text-black" : "text-[#999]"}`}>
        {icons.m}
        <span className="ml-[5px]">ModelSim Microsemi Pro 2022.2</span>
        <span className="ml-auto flex">
          <button type="button" aria-label="Minimize" className="flex h-7 w-[46px] items-center justify-center"><svg width="10" height="10" fill="none" stroke="currentColor"><path d="M0 5.5h10" /></svg></button>
          <button type="button" aria-label="Maximize" className="flex h-7 w-[46px] items-center justify-center"><svg width="10" height="10" fill="none" stroke="currentColor"><path d="M.5.5h9v9h-9z" /></svg></button>
          <button type="button" aria-label="Close" className="flex h-7 w-[46px] items-center justify-center"><svg width="10" height="10" fill="none" stroke="currentColor"><path d="M0 0l10 10M10 0L0 10" /></svg></button>
        </span>
      </header>
      <nav className={`flex h-[22px] shrink-0 items-center gap-3 bg-white pl-[7px] font-['Open_Sans',sans-serif] text-xs ${active ? "text-black" : "text-[#6d6d6d]"}`}>
        {menus.map((m) => (
          <button key={m} type="button">{m}</button>
        ))}
      </nav>
      <Toolbars active={active} />
      <div className="flex min-h-0 flex-1 gap-2 bg-[#c8c8c8] pb-px pl-px pr-1">
        <SimPane />
        <div className="flex w-[378px] shrink-0 flex-col gap-[7px]">
          <ObjectsPane />
          <ProcessesPane />
        </div>
        <WavePane />
      </div>
      <div className="h-[5px] shrink-0 bg-[#c8c8c8]" />
      <section className={`h-[195px] shrink-0 bg-[#f0f0f0] ${frame}`}>
        <PaneTitle title="Transcript" icon={<Glyph crisp={false}><path d="M3 15V4l3-3h4l3 3v11" stroke="#555" strokeWidth="2.5" /><path d="M5 9h6" stroke="#c9a0a0" /></Glyph>} />
        <div className="flex min-h-0 flex-1">
          <div className="ml-1 flex-1 border-l border-t-2 border-black bg-white pt-4 text-[#000080]">VSIM 315&gt;</div>
          <div className="flex w-[18px] flex-col justify-between bg-[#f8f8f8]">
            {[0, 1].map((i) => (
              <button key={i} type="button" aria-label={i ? "Scroll down" : "Scroll up"} className="flex h-4 items-center justify-center border border-t-white border-l-white border-r-[#6e6e6e] border-b-[#6e6e6e] bg-[#f0f0f0]">
                <svg viewBox="0 0 6 4" width="6" height="4"><path d={i ? "M0 0h6L3 4z" : "M0 4h6L3 0z"} /></svg>
              </button>
            ))}
          </div>
        </div>
      </section>
      <footer className="flex h-6 shrink-0 items-center gap-1 pl-[3px] pr-2">
        <span className="h-[19px] w-[170px] border border-t-[#a0a0a0] border-l-[#a0a0a0] border-white pl-[5px]">88925153 ps to 90056571 ps</span>
        <span className="h-[19px] w-[60px] whitespace-nowrap border border-t-[#a0a0a0] border-l-[#a0a0a0] border-white pl-px">Project : tb</span>
        <span className="h-[19px] w-[198px] whitespace-pre border border-t-[#a0a0a0] border-l-[#a0a0a0] border-white pl-px">Now: 90 us  Delta: 0</span>
        <span className="h-[19px] flex-1 border border-t-[#a0a0a0] border-l-[#a0a0a0] border-white pl-px">sim:/tb_cpuled</span>
        <svg width="10" height="18" className="ml-1"><path d="M10 4L0 18M10 9L4 18M10 14L8 18" stroke="#888" /></svg>
      </footer>
    </div>
  );
}

/* ------------------------------------------------------------------ */
/* Paint window                                                        */
/* ------------------------------------------------------------------ */

function PaletteIcon({ size = 20 }: { size?: number }) {
  return (
    <svg viewBox="0 0 20 20" width={size} height={size} fill="none" aria-hidden="true">
      <path d="M9 3c5 0 9 3 9 7 0 3-3 2-4 4s-1 5-5 5c-5 0-8-3-8-8s3-8 8-8z" fill="#b9dcee" stroke="#6ba3c4" strokeWidth=".7" />
      <circle cx="5" cy="9" r="1.6" fill="#e5462e" />
      <circle cx="9" cy="6" r="1.5" fill="#f6b21b" />
      <circle cx="5.5" cy="13" r="1.6" fill="#3fa845" />
      <circle cx="10" cy="15" r="1.5" fill="#3a6fd8" />
      <path d="M12 13L17 1" stroke="#c8813a" strokeWidth="2" />
      <path d="M11 16l2-5" stroke="#e0a060" strokeWidth="2.5" />
    </svg>
  );
}

function RibbonGroup({ label, className = "", children }: Kids & { label: string; className?: string }) {
  return (
    <div className={`flex shrink-0 flex-col border-r border-[#e2e3e4] ${className}`}>
      <div className="flex h-[88px] pt-1">{children}</div>
      <div className="h-5 text-center leading-5 text-[#5a5a5a]">{label}</div>
    </div>
  );
}

const shapes: string[] = [
  "M2 2l13 11", "M1 13C5-2 8 16 15 1", "M8 1.5c9 0 9 12 0 12s-9-12 0-12z", "M1.5 2h13v11h-13z", "M4 2h8l2.5 2v7L12 13H4l-2.5-2V4z", "M3 14L5 2h6v5h3v7z", "M8 1.5L14 13.5H2z",
  "M2 2v12h11z", "M8 1.5l6 6-6 6-6-6z", "M8 1.5l6.5 5-2.5 7H4l-2.5-7z", "M8 1l6 3v7l-6 3-6-3V4z", "M1 5h6V1.5l7 6-7 6V10H1z", "M15 5H9V1.5l-7 6 7 6V10h6z", "M5 14V8H1.5L8 1l6.5 7H11v6z",
  "M5 1v6H1.5L8 14l6.5-7H11V1z", "M8 1l1.5 5L15 7.5 9.5 9 8 14 6.5 9 1 7.5 6.5 6z", "M8 1l2 5h5l-4 3 1.5 5L8 11l-4.5 3L5 9 1 6h5z", "M8 1l2 3h4l-2 3.5 2 3.5h-4l-2 3-2-3H2l2-3.5L2 4h4z", "M2 2h12v8H8l-3 4v-4H2z", "M8 2c8 0 8 9 0 9l-3 3v-4C-1 8 2 2 8 2z", "M5 2q3-2 5 0 4 0 4 4 2 3-2 5-3 3-5 1l-3 2v-3Q-1 8 3 6 1 2 5 2z",
];

const palette: string[][] = [
  ["#000000", "#7f7f7f", "#880015", "#ed1c24", "#ff7f27", "#fff200", "#22b14c", "#00a2e8", "#3f48cc", "#a349a4"],
  ["#ffffff", "#c3c3c3", "#b97a57", "#ffaec9", "#ffc90e", "#efe4b0", "#b5e61d", "#99d9ea", "#7092be", "#c8bfe7"],
  ["#f5f6f7", "#f5f6f7", "#f5f6f7", "#f5f6f7", "#f5f6f7", "#f5f6f7", "#f5f6f7", "#f5f6f7", "#f5f6f7", "#f5f6f7"],
];

const B = "#2b6ea8";

function Ribbon() {
  return (
    <div className="flex h-[115px] shrink-0 border-b border-t border-[#dadbdc] bg-[#f5f6f7] py-[2px] text-[13px] leading-[17px] text-[#3b3b3b]">
      <RibbonGroup label="Clipboard" className="w-[125px]">
        <button type="button" className="flex w-[62px] flex-col items-center pt-1">
          <svg viewBox="0 0 32 36" width="32" height="36" fill="none"><rect x="1.5" y="3" width="29" height="32" rx="2" fill="#a8743c" stroke="#7a5020" /><path d="M4 6h24v26H4z" fill="#fff" /><path d="M5 10.5h22M5 14.5h22M5 18.5h22M5 22.5h22M5 26.5h22" stroke="#b4cbe8" /><path d="M10 6c0-3 4-2 4-5h4c0 3 4 2 4 5z" fill="#ccc" stroke="#777" /></svg>
          <span className="mt-2">Paste</span>
          <span className="mt-1"><DownTri /></span>
        </button>
        <div className="flex flex-col gap-2 pt-1">
          <button type="button" className="flex h-[18px] items-center gap-[5px]"><svg viewBox="0 0 16 20" width="16" height="20" fill="none"><path d="M4 1l6 12M11 1L6 13" stroke="#6a8298" strokeWidth="1.5" /><circle cx="5" cy="15.5" r="2.5" stroke="#1e88d0" strokeWidth="2" /><circle cx="11" cy="15.5" r="2.5" stroke="#1e88d0" strokeWidth="2" /></svg>Cut</button>
          <button type="button" className="flex h-[18px] items-center gap-[5px]"><svg viewBox="0 0 16 20" width="16" height="20" fill="none"><path d="M1 1h7l3 3v10H1zM6 6h6l3 3v10H6z" fill="#fff" stroke="#888" /><path d="M3 5h4M3 8h3M8 11h5M8 13h5M8 15h5" stroke="#7aa7d8" /></svg>Copy</button>
        </div>
      </RibbonGroup>
      <RibbonGroup label="Image" className="w-[141px]">
        <button type="button" className="ml-1 flex h-[82px] w-[50px] flex-col items-center border border-[#5fa3e0] bg-[#c9e0f7]">
          <span className="flex h-11 w-full items-center justify-center border-b border-[#5fa3e0]"><span className="h-7 w-[35px] border border-dashed border-[#1a5fa8]" /></span>
          <span className="mt-[2px]">Select</span>
          <span className="mt-1"><DownTri /></span>
        </button>
        <div className="ml-1 flex flex-col gap-2 pt-1">
          <button type="button" className="flex h-[18px] items-center gap-1"><svg viewBox="0 0 18 18" width="18" height="18" fill="none"><path d="M4 0v14h14M0 4h14v14" stroke={B} strokeWidth="1.5" /><path d="M6 12L17 1" stroke={B} /></svg>Crop</button>
          <button type="button" className="flex h-[18px] items-center gap-1"><svg viewBox="0 0 18 18" width="18" height="18" fill="none"><path d="M6 2h12v9H6zM1 9h9v7H1z" fill="#fff" stroke={B} strokeWidth="1.3" /></svg>Resize</button>
          <button type="button" className="flex h-[18px] items-center gap-1"><svg viewBox="0 0 18 18" width="18" height="18" fill="none"><path d="M10 17V2l7 15z" fill="#1e78c0" /><path d="M0 17l8-6v6z" fill="#b0b8c0" /><path d="M1 7c0-4 3-4 5-4M4 0l3 3-3 3" stroke="#1e78c0" strokeWidth="1.5" /></svg>Rotate<DownTri /></button>
        </div>
      </RibbonGroup>
      <RibbonGroup label="Tools" className="w-24">
        <div className="ml-1 grid h-[74px] w-[84px] grid-cols-3 place-items-center pt-2">
          <button type="button" aria-label="Pencil"><svg viewBox="0 0 20 20" width="20" height="20"><path d="M1 19l2-6L15 1l4 4L7 17z" fill="#e8c070" stroke="#8a5a20" /><path d="M13 3l4 4 2-2-4-4z" fill="#d04848" /><path d="M1 19l2-2-1-1z" /></svg></button>
          <button type="button" aria-label="Fill with color"><svg viewBox="0 0 20 20" width="20" height="20"><path d="M7 3l11 6-7 9-8-5z" fill="#d8e4f0" stroke="#6a8ab0" /><path d="M8 1v8" stroke="#446" /><path d="M1 16V8l8-3-5 5z" fill="#f07030" /></svg></button>
          <button type="button" aria-label="Text" className="font-['Liberation_Serif',serif] text-2xl font-bold text-[#1e3f66]">A</button>
          <button type="button" aria-label="Eraser"><svg viewBox="0 0 20 20" width="20" height="20"><path d="M1 12L9 2h9l1 5-8 10H2z" fill="#f0a8a0" stroke="#c07068" /><path d="M1 12h9l1 5" fill="none" stroke="#c07068" /></svg></button>
          <button type="button" aria-label="Color picker"><svg viewBox="0 0 20 20" width="20" height="20"><path d="M2 18l1-4 8-8 3 3-8 8z" fill="#c8e0f4" stroke="#5a7890" /><path d="M10 4l6 6M12 6l4-4a2 2 0 013 3l-4 4z" fill="#2a70b8" stroke="#1a4f90" strokeWidth="2" /></svg></button>
          <button type="button" aria-label="Magnifier"><svg viewBox="0 0 20 20" width="20" height="20"><circle cx="8" cy="8" r="6" fill="#dceefa" stroke="#8a9ab0" strokeWidth="1.5" /><path d="M12 12l6 7" stroke="#a07850" strokeWidth="3" /></svg></button>
        </div>
      </RibbonGroup>
      <RibbonGroup label="" className="w-[61px]">
        <button type="button" className="flex w-full flex-col items-center pt-[3px]">
          <svg viewBox="0 0 40 40" width="40" height="40"><path d="M.5.5h39v39H.5z" fill="#f3f9fc" stroke="#999" /><path d="M15 9C-2 16 0 32 14 36c10 1 14-4 12-8-7 2-12 4-14 1C6 22 8 13 17 9z" fill="#e85a24" /><path d="M20 35c1-12 6-16 12-17 2 9-4 16-12 17z" fill="#8a6440" /><path d="M26 20L38 3l2 1v14l-8 8z" fill="#4a5a70" /><path d="M27 20L38 5" stroke="#dde6ee" strokeWidth="2" /></svg>
          <span className="mt-1">Brushes</span>
          <span className="mt-1"><DownTri /></span>
        </button>
      </RibbonGroup>
      <RibbonGroup label="Shapes" className="w-[287px]">
        <div className="ml-[6px] mt-[3px] flex h-[74px] border border-[#dcdfe3] bg-white">
          <div className="grid w-[171px] grid-cols-7 place-items-center">
            {shapes.map((d) => (
              <svg key={d} viewBox="0 0 16 15" width="20" height="19" preserveAspectRatio="none" fill="#f4f9fd" stroke={B} strokeWidth=".9"><path d={d} /></svg>
            ))}
          </div>
          <div className="flex w-4 flex-col items-center justify-around border-l border-[#e4e4e4] bg-[#f5f6f7]">
            <svg viewBox="0 0 5 4" width="6" height="4"><path d="M0 4h5L2.5 0z" fill="#999" /></svg><DownTri color="#555" /><DownTri color="#333" />
          </div>
        </div>
        <div className="ml-1 flex flex-col gap-2 pt-1 text-[#8d8d8d]">
          <button type="button" className="flex h-[18px] items-center gap-1"><svg viewBox="0 0 20 18" width="20" height="18" fill="none"><path d="M1 3h12v13H1z" stroke="#a8b8cc" strokeWidth="1.5" /><path d="M7 13L18 1" stroke="#9aaac0" strokeWidth="3" /></svg>Outline <DownTri color="#999" /></button>
          <button type="button" className="flex h-[18px] items-center gap-1"><svg viewBox="0 0 20 18" width="20" height="18"><path d="M4 6l7-5 7 7-8 6z" fill="#c8d2e0" stroke="#9aaac0" /><path d="M1 13h18v5H1z" fill="#aab8d0" /></svg>Fill <DownTri color="#999" /></button>
        </div>
      </RibbonGroup>
      <RibbonGroup label="" className="w-[61px]">
        <button type="button" className="flex w-full flex-col items-center pt-1 text-[#9a9a9a]">
          <svg viewBox="0 0 40 36" width="40" height="36"><path d="M0 2.5h40" stroke="#7a8fb4" /><path d="M0 8h40" stroke="#7a8fb4" strokeWidth="2" /><path d="M0 17h40" stroke="#7a8fb4" strokeWidth="4" /><path d="M0 29h40" stroke="#7a8fb4" strokeWidth="8" /></svg>
          <span className="mt-2">Size</span>
          <span className="mt-1"><DownTri color="#aaa" /></span>
        </button>
      </RibbonGroup>
      <RibbonGroup label="Colors" className="w-[435px]">
        <button type="button" className="ml-1 flex h-[82px] w-[50px] flex-col items-center border border-[#7ab0e8] bg-[#c9e0f7] pt-[3px]">
          <span className="h-[39px] w-[38px] border-2 border-[#888] bg-black outline-1 -outline-offset-3 outline-white" />
          <span className="mt-1 text-center">Color<br />1</span>
        </button>
        <button type="button" className="flex h-[82px] w-[50px] flex-col items-center pt-2">
          <span className="h-[30px] w-[30px] border border-[#888] bg-white" />
          <span className="mt-2 text-center">Color<br />2</span>
        </button>
        <div className="ml-[2px] mt-px grid h-[81px] w-[270px] grid-cols-10 grid-rows-3">
          {palette.flat().map((c, i) => (
            <button key={i} type="button" aria-label={`Palette ${i + 1}`} className="h-[26px] w-[25px] border border-[#a0a0a0] bg-white p-px">
              <span className="block h-full w-full" style={{ backgroundColor: c }} />
            </button>
          ))}
        </div>
        <button type="button" className="flex w-[54px] flex-col items-center pt-1 text-center">
          <span className="h-[37px] w-[37px] border-2 border-[#c8c8c8] bg-[linear-gradient(180deg,transparent,#8888),linear-gradient(90deg,#f00,#ff0_20%,#0f0_35%,#0ff_52%,#00f_68%,#f0f_85%,#f00)]" />
          <span className="mt-[7px]">Edit<br />colors</span>
        </button>
      </RibbonGroup>
      <RibbonGroup label="" className="w-[67px]">
        <button type="button" className="flex w-full flex-col items-center whitespace-nowrap pt-1 text-center">
          <svg viewBox="0 0 37 37" width="37" height="37">
            <defs><linearGradient id="p3" x1="0.6" y1="0" x2="0.4" y2="1"><stop offset="0" stopColor="#3cc8f0" /><stop offset=".4" stopColor="#9070e8" /><stop offset=".7" stopColor="#e0407a" /><stop offset="1" stopColor="#f8b020" /></linearGradient></defs>
            <path d="M.5.5h36v36H.5z" fill="#fafafa" stroke="#bbb" /><path d="M18 3c8 0 11 5 10 11-1 8-9 12-12 20 0-8-7-12-8-20C8 8 11 3 18 3z" fill="url(#p3)" />
          </svg>
          <span className="mt-[7px]">Edit with<br />Paint 3D</span>
        </button>
      </RibbonGroup>
    </div>
  );
}

function Paint() {
  return (
    <div className="flex h-full flex-col overflow-hidden bg-white font-['Open_Sans',sans-serif]">
      <header className="flex h-[29px] shrink-0 items-center text-sm">
        <PaletteIcon />
        <span className="mx-[6px] h-4 w-px bg-[#888]" />
        <button type="button" aria-label="Save" className="ml-2"><svg viewBox="0 0 16 16" width="17" height="16"><path d="M0 0h16v16H0z" fill="#7d5bb8" /><path d="M3 0h10v7H3z" fill="#e8e0f4" /><path d="M4 10h8v6H4z" fill="#fff" /><path d="M6 11h2v4H6z" fill="#555" /></svg></button>
        <button type="button" aria-label="Undo" className="ml-2"><svg viewBox="0 0 18 18" width="18" height="18" fill="none"><path d="M3 5h6c8 0 8 10 0 12" stroke="#1e90e0" strokeWidth="3.5" /><path d="M8 0v10L0 5z" fill="#1e90e0" /></svg></button>
        <button type="button" aria-label="Redo" className="ml-2"><svg viewBox="0 0 18 18" width="18" height="18" fill="none"><path d="M15 5H9C1 5 1 15 9 17" stroke="#b4c0d4" strokeWidth="3.5" /><path d="M10 0v10l8-5z" fill="#b4c0d4" /></svg></button>
        <span className="ml-2 mr-4"><DownTri /></span>
        <span className="mr-2 h-4 w-px bg-[#aaa]" />
        <h1 className="text-sm">tb_clock_gen.png - Paint</h1>
        <span className="ml-auto flex">
          <button type="button" aria-label="Minimize" className="flex h-7 w-[58px] items-center justify-center"><svg width="13" height="13" stroke="#000"><path d="M0 6.5h13" /></svg></button>
          <button type="button" aria-label="Restore" className="flex h-7 w-[58px] items-center justify-center"><svg width="13" height="13" fill="none" stroke="#000"><path d="M.5 3.5h9v9h-9zM3 3V.5h9.5V10H10" /></svg></button>
          <button type="button" aria-label="Close" className="flex h-7 w-[62px] items-center justify-center"><svg width="13" height="13" stroke="#000"><path d="M0 0l13 13M13 0L0 13" /></svg></button>
        </span>
      </header>
      <nav className="flex h-7 shrink-0 items-stretch text-[13px] text-[#333]">
        <button type="button" className="w-[70px] bg-[#1979ca] text-white">File</button>
        <button type="button" className="-mb-px w-[69px] border border-b-0 border-[#dadbdc] bg-[#f5f6f7]">Home</button>
        <button type="button" className="w-16">View</button>
        <span className="ml-auto flex items-center gap-3 pr-1">
          <ChevronUp size={14} color="#999" />
          <button type="button" aria-label="Help" className="flex h-5 w-5 items-center justify-center rounded-full bg-[#0f6cc4] text-[13px] text-white">?</button>
        </span>
      </nav>
      <Ribbon />
      <main className="flex min-h-0 flex-1 bg-[#c8d1e2]">
        <div className="relative min-w-0 flex-1 overflow-hidden">
          <div className="absolute left-1 top-[3px] h-[1200px] w-[3840px] border-l border-t border-dashed border-[#0078d7] bg-[linear-gradient(180deg,#4a4a4a,#2c2c2c_20%,#6a6a6a_50%,#3a3a3a_80%,#555)]">
            <div className="absolute left-2 top-px h-[1167px] w-[1920px]"><ModelSim active /></div>
          </div>
          <span className="absolute left-[3px] top-[2px] h-[5px] w-[5px] border border-[#444] bg-white" />
        </div>
        <div className="flex w-5 shrink-0 flex-col bg-[#f0f0f0]">
          <button type="button" aria-label="Scroll up" className="flex h-5 items-center justify-center"><ChevronUp size={13} strokeWidth={3} color="#555" /></button>
          <div className="flex-1"><div className="h-3/4 bg-[#cdcdcd]" /></div>
          <button type="button" aria-label="Scroll down" className="flex h-5 items-center justify-center"><ChevronDown size={13} strokeWidth={3} color="#555" /></button>
        </div>
      </main>
      <div className="flex h-[21px] shrink-0 border-b border-[#d7d7d7] bg-[#f0f0f0]">
        <button type="button" aria-label="Scroll left" className="flex w-[21px] items-center justify-center"><ChevronLeft size={13} strokeWidth={3} color="#555" /></button>
        <div className="flex-1"><div className="h-[19px] w-[49%] bg-[#cdcdcd]" /></div>
        <span className="w-[22px]" />
        <button type="button" aria-label="Scroll right" className="flex w-[21px] items-center justify-center"><ChevronRight size={13} strokeWidth={3} color="#555" /></button>
      </div>
      <footer className="flex h-8 shrink-0 items-center bg-[#f0f0f0] text-sm text-black">
        <span className="flex h-7 w-[200px] items-center border-r border-[#d7d7d7] pl-1"><svg viewBox="0 0 16 16" width="16" height="16" fill="none" stroke="#30507a"><path d="M8 1v14M1 8h14M6 3l2-2 2 2M6 13l2 2 2-2M3 6L1 8l2 2M13 6l2 2-2 2" /></svg></span>
        <span className="flex h-7 w-[200px] items-center border-r border-[#d7d7d7] pl-[6px]"><svg viewBox="0 0 18 16" width="18" height="16" fill="none" stroke="#30507a"><path d="M3.5 2.5h13v11h-13z" strokeDasharray="1 1" /><path d="M1 1v13M3 15.5h14" /></svg></span>
        <span className="flex h-7 w-[200px] items-center gap-1 border-r border-[#d7d7d7] pl-[5px]"><svg viewBox="0 0 18 16" width="18" height="16" fill="none" stroke="#30507a"><path d="M3.5 1.5h14v12h-14z" fill="#e4eef8" /><path d="M1 1v13M3 15.5h14" /></svg>3840 × 1200px</span>
        <span className="flex h-7 w-[200px] items-center gap-1 border-r border-[#d7d7d7] pl-[6px]"><svg viewBox="0 0 16 16" width="16" height="16" fill="#fff" stroke="#30507a"><path d="M.5.5h15v15H.5zM3 1h10v8H3zM4 11h8v4H4z" /></svg>Size: 426.9KB</span>
        <span className="ml-auto flex h-7 items-center gap-[10px] border-l border-[#d7d7d7] pl-6 pr-1">
          <span>100%</span>
          <button type="button" aria-label="Zoom out" className="flex h-5 w-5 items-center justify-center rounded-full border border-[#999] bg-[#f4f4f4] leading-none">−</button>
          <span className="relative mx-1 flex h-6 w-[105px] items-center">
            <span className="h-1 w-full border border-[#d0d4d6] bg-[#e7eaea]" />
            <input type="range" aria-label="Zoom" className="absolute inset-0 w-full opacity-0" />
            <svg width="12" height="22" className="pointer-events-none absolute left-[46px] top-px"><path d="M0 0h12v17l-6 5-6-5z" fill="#0078d7" /></svg>
          </span>
          <button type="button" aria-label="Zoom in" className="flex h-5 w-5 items-center justify-center rounded-full border border-[#999] bg-[#f4f4f4] leading-none">+</button>
        </span>
      </footer>
    </div>
  );
}

/* ------------------------------------------------------------------ */
/* Taskbar                                                             */
/* ------------------------------------------------------------------ */

function App24({ size, children }: Kids & { size: number }) {
  return <svg viewBox="0 0 24 24" width={size} height={size} fill="none" aria-hidden="true">{children}</svg>;
}

function appIcon(name: string, s: number): ReactNode {
  switch (name) {
    case "Mail":
      return <App24 size={s}><path d="M0 9l12-9 12 9v15H0z" fill="#1066b0" /><path d="M2 9h20l-10 9z" fill="#fff" /><path d="M0 9l12 9 12-9v15H0z" fill="#28a8ea" /><path d="M4 9h16l-8 7z" fill="#fff" /><path d="M0 24L24 9v15z" fill="#50c4f8" /></App24>;
    case "Teams":
      return <App24 size={s}><circle cx="13" cy="4" r="4" fill="#5059c9" /><circle cx="21" cy="5" r="2.5" fill="#5059c9" /><path d="M8 9h11v10c-3 5-9 4-11 0z" fill="#7b83eb" /><path d="M18 9h6v7c-1 3-4 3-6 2z" fill="#5059c9" /><path d="M0 6h12v12H0z" fill="#4048b0" /><path d="M3 9h6M6 9v7" stroke="#fff" strokeWidth="2" /><circle cx="19" cy="19" r="5" fill="#86b92a" stroke="#fff" /><path d="M17 19l2 2 3-4" stroke="#fff" strokeWidth="1.5" /></App24>;
    case "Notepad":
      return <App24 size={s}><path d="M7 1l13 3-3 19L3 18z" fill="#6cb4bf" /><path d="M7 1l13 3-1 4L6 5z" fill="#d8eef0" /><path d="M20 4l2 16-5 3z" fill="#e0e8ea" /></App24>;
    case "Store":
      return <App24 size={s}><path d="M8 5V2h8v3" stroke="#28a8ea" strokeWidth="2" /><path d="M2 5h20v16l-2 2H4l-2-2z" fill="#f6f6f6" /><path d="M7 9h4v4H7z" fill="#f05022" /><path d="M13 9h4v4h-4z" fill="#7fba00" /><path d="M7 15h4v4H7z" fill="#00a4ef" /><path d="M13 15h4v4h-4z" fill="#ffb900" /></App24>;
    case "Command Prompt":
      return <App24 size={s}><path d="M1 3h22v18H1z" fill="#050505" stroke="#999" /><path d="M1 4h22" stroke="#ddd" strokeWidth="2" /><path d="M3 8h3M8 8v2M10 10h4" stroke="#ccc" /></App24>;
    case "Word":
      return <App24 size={s}><path d="M6 1h18v22H6z" fill="#2b7cd3" /><path d="M6 1h18v6H6z" fill="#41a5ee" /><path d="M6 17h18v6H6z" fill="#103f91" /><path d="M0 6h13v12H0z" fill="#185abd" /><path d="M3 9l2 6 2-5 2 5 2-6" stroke="#fff" strokeWidth="1.5" /></App24>;
    case "File Explorer":
      return <App24 size={s}><path d="M1 2h8l2 3h12v16H1z" fill="#f6b73c" /><path d="M1 8h22v13H1z" fill="#ffd766" /><path d="M5 22v-8h14v8h-4v-4H9v4z" fill="#3a9be0" /></App24>;
    case "PowerShell":
      return <App24 size={s}><path d="M5 2h19l-4 20H0z" fill="#2f6bd0" /><path d="M8 6l6 6-8 6M12 18h6" stroke="#fff" strokeWidth="2" /></App24>;
    case "Paint":
      return <PaletteIcon size={s} />;
    case "Chrome":
      return <App24 size={s}><circle cx="12" cy="12" r="12" fill="#fbbc04" /><path d="M12 12L1.6 6A12 12 0 0122.4 6z" fill="#ea4335" /><path d="M12 12L1.6 6A12 12 0 0012 24z" fill="#34a853" /><circle cx="12" cy="12" r="5.5" fill="#4285f4" stroke="#fff" strokeWidth="1.5" /></App24>;
    case "Notepad++":
      return <App24 size={s}><path d="M2 2h16l2 20H4z" fill="#f0f4e8" stroke="#888" /><path d="M4 8h13v13H5z" fill="#8cd048" /><path d="M6 15c2-5 8-5 9-1-2 3-6 4-9 1z" fill="#2c7a1c" /><path d="M23 3L14 18" stroke="#e0a020" strokeWidth="2" /></App24>;
    case "Power":
      return <App24 size={s}><circle cx="12" cy="12" r="12" fill="#20a0c8" /><path d="M12 12L2 5A12 12 0 004 21z" fill="#e84a2a" /><path d="M12 12L4 21a12 12 0 0014 1z" fill="#f0a020" /><circle cx="12" cy="12" r="8" fill="#2aa0b8" /><path d="M12 5v7M8 8a5.5 5.5 0 108 0" stroke="#fff" strokeWidth="2.5" /></App24>;
    case "Ubuntu":
      return <span className="flex items-center justify-center bg-[#e95420] p-1"><FaUbuntu size={s - 8} color="#fff" /></span>;
    case "GitHub":
      return <span className="flex items-center justify-center rounded-full bg-[#6e3cb0] p-1"><FaGithub size={s - 8} color="#fff" /></span>;
    case "Spotify":
      return <FaSpotify size={s} color="#1ed760" />;
    case "Settings":
      return <Settings size={s} color="#fff" strokeWidth={2.5} />;
    case "Discord":
      return <span className="flex items-center justify-center rounded-full bg-[#5865f2] p-1"><FaDiscord size={s - 8} color="#fff" /></span>;
    default:
      return <App24 size={s}><path d="M0 0h24v4H0z" fill="#0000e0" stroke="#bbb" /><path d="M3 23V7h4l5 9 5-9h4v16h-4v-9l-5 8-5-8v9z" fill="#111" stroke="#bbb" /></App24>;
  }
}

const apps: [string, boolean][] = [
  ["Mail", true], ["Teams", true], ["Notepad", false], ["Store", false], ["Command Prompt", false], ["Word", true], ["File Explorer", true],
  ["PowerShell", false], ["Paint", true], ["Chrome", true], ["Notepad++", true], ["Power", false], ["Ubuntu", false], ["GitHub", false],
  ["ModelSim", false], ["Spotify", true], ["Settings", true], ["Discord", false], ["ModelSim Pro", true],
];

function StartLogo({ size }: { size: number }) {
  return <svg viewBox="0 0 20 20" width={size} height={size} fill="#fff"><path d="M0 3l8-1v7.5H0zM9 2l11-2v9.5H9zM0 10.5h8V18l-8-1zM9 10.5h11V20L9 18z" /></svg>;
}

function TaskView({ size }: { size: number }) {
  return <svg viewBox="0 0 20 20" width={size} height={size} fill="none" stroke="#fff" strokeWidth="1.3"><path d="M2 1v3h11V1M2 19v-3h11v3M2 7h11v6H2zM17 1v18M16 8h3v3h-3z" /></svg>;
}

function AppStrip({ wide }: { wide: boolean }) {
  return (
    <div className={`grid h-full grid-cols-[repeat(19,minmax(0,1fr))] ${wide ? "w-[1033px]" : "ml-[2px] w-[931px]"}`}>
      {apps.map(([name, open]) => (
        <button key={name} type="button" aria-label={name} className={`flex flex-col items-center ${name === "Paint" ? "bg-[#55585a]" : ""}`}>
          <span className="flex flex-1 items-center">{appIcon(name, wide ? 29 : 24)}</span>
          <span className={`h-[3px] ${name === "Paint" ? "w-full" : "w-10"} ${open ? "bg-[#76b9ed]" : ""}`} />
        </button>
      ))}
    </div>
  );
}

const barBg = "bg-[linear-gradient(90deg,#26292b,#222425_35%,#333130_42%,#28292b_52%,#242628)]";

export default function App() {
  return (
    <div className="relative grid h-screen w-full grid-cols-2 overflow-hidden bg-[linear-gradient(180deg,#4d4d4f,#6d6a66_25%,#55565a_45%,#7a7c80_70%,#2c2d30)] font-['Open_Sans',sans-serif]">
      <div className="flex min-w-0 flex-col justify-end">
        <div className={`flex h-10 shrink-0 items-center text-white ${barBg}`}>
          <button type="button" aria-label="Start" className="flex w-12 justify-center"><StartLogo size={17} /></button>
          <button type="button" aria-label="Search" className="flex w-12 justify-center"><Search size={22} className="-scale-x-100" /></button>
          <button type="button" aria-label="Task view" className="flex w-12 justify-center"><TaskView size={17} /></button>
          <AppStrip wide={false} />
          <div className="ml-auto pr-[6px] text-center text-xs leading-[17px]">10:43 AM<br />6/19/2023</div>
        </div>
      </div>
      <div className="flex min-w-0 flex-col justify-end">
        <div className={`flex h-[50px] shrink-0 items-center text-white ${barBg}`}>
          <button type="button" aria-label="Start" className="flex w-[60px] justify-center"><StartLogo size={21} /></button>
          <label className="flex h-full w-[360px] shrink-0 items-center border border-[#5a5a5a] bg-[#333] pl-3">
            <Search size={23} strokeWidth={1.5} className="-scale-x-100" />
            <input type="text" aria-label="Search" placeholder="Type here to search" className="ml-3 w-full bg-transparent text-[17px] outline-none placeholder:text-[#ddd]" />
          </label>
          <button type="button" aria-label="Task view" className="flex w-[64px] justify-center"><TaskView size={21} /></button>
          <AppStrip wide />
          <div className="ml-auto flex items-center">
            <App24 size={32}><path d="M5 14a5 5 0 010-9 7 7 0 0113 1 5 5 0 01-1 9z" fill="#bcd8f4" /><path d="M9 12l3 6a2.5 2.5 0 11-5 0zM16 12l3 7a2.5 2.5 0 11-5 0z" fill="#3a98e8" /><circle cx="20" cy="3" r="2.5" fill="#d02a20" /></App24>
            <span className="ml-2 text-[17px]">54°F</span>
            <ChevronUp size={20} className="ml-7" />
            <span className="ml-2"><App24 size={22}><path d="M6 18a5 5 0 010-9 7 7 0 0112 1 4 4 0 011 8z" fill="#1a8ae0" /></App24></span>
            <span className="ml-2"><App24 size={22}><path d="M6 5h16v11H6zM12 16v4M8 20h9M3 3v6h4V3z" stroke="#fff" strokeWidth="1.5" /></App24></span>
            <span className="ml-2"><App24 size={22}><path d="M3 9h4l5-5v16l-5-5H3zM15 9l6 6M21 9l-6 6" stroke="#fff" strokeWidth="1.5" /></App24></span>
            <div className="ml-3 text-center text-sm leading-[22px]">10:43 AM<br />6/19/2023</div>
            <span className="ml-6 mr-7"><App24 size={25}><path d="M2 3h20v16h-7l-3 3-3-3H2z" stroke="#fff" strokeWidth="1.5" /></App24></span>
          </div>
        </div>
      </div>
      <div className="absolute bottom-8 left-2 right-[calc(50%-8px)] top-px border-b border-[#444]"><ModelSim active={false} /></div>
      <div className="absolute bottom-[50px] left-1/2 right-0 top-0"><Paint /></div>
    </div>
  );
}
